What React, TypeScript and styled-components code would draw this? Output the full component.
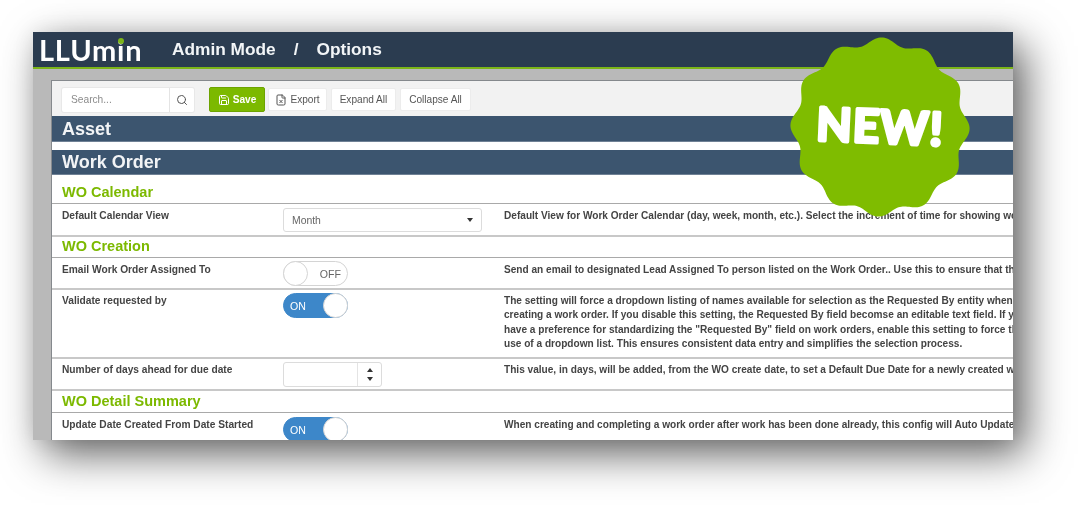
import React from "react";
import styled, { createGlobalStyle } from "styled-components";
import { Search, Save, FileX } from "lucide-react";

const Global = createGlobalStyle`
  html, body { margin: 0; padding: 0; background: #fff; }
  body { font-family: "Liberation Sans", Arial, sans-serif; color: #333; }
`;

const Page = styled.div`
  width: 1078px;
  height: 505px;
  padding: 32px 65px 65px 33px;
  box-sizing: border-box;
  overflow: hidden;
  position: relative;
`;

const Win = styled.div`
  width: 980px;
  height: 408px;
  display: flex;
  flex-direction: column;
  overflow: hidden;
  box-shadow: 12px 14px 40px rgba(0, 0, 0, 0.62), 0 0 20px rgba(0, 0, 0, 0.08);
`;

const Blur = styled.div`
  filter: blur(0.45px);
  display: flex;
  flex-direction: column;
  height: 100%;
`;

const Header = styled.header`
  height: 37px;
  box-sizing: border-box;
  flex: none;
  background: #2b3c50;
  border-bottom: 2px solid #7cb518;
  display: flex;
  align-items: center;
  color: #f2f5f7;
  font-size: 17.3px;
  font-weight: 700;
`;

const Logo = styled.div`
  width: 139px;
  padding-left: 6px;
  box-sizing: border-box;
  font-family: "Lato", sans-serif;
  font-size: 29px;
  font-weight: 700;
  letter-spacing: 0.8px;
  color: #fff;
  line-height: 35px;
  white-space: nowrap;
`;

const LogoI = styled.span`
  position: relative;
  &::after {
    content: "";
    position: absolute;
    left: 1px;
    top: 5.5px;
    width: 6px;
    height: 6px;
    border-radius: 50%;
    background: #7cb518;
  }
`;

const Crumb = styled.span``;
const Slash = styled.span`
  margin: 0 18px;
`;

const Body = styled.div`
  flex: 1;
  min-height: 0;
  background: #b9b9b9;
  padding: 11px 0 0 18px;
  display: flex;
`;

const Panel = styled.div`
  flex: 1;
  min-width: 0;
  background: #fff;
  border-left: 1px solid #85898d;
  border-top: 1px solid #85898d;
  overflow: hidden;
`;

const Toolbar = styled.div`
  height: 35px;
  background: #f2f2f2;
  display: flex;
  align-items: center;
  padding: 2px 0 0 10px;
  box-sizing: border-box;
`;

const SearchBox = styled.div`
  display: flex;
  height: 24px;
  width: 132px;
  background: #fff;
  border-radius: 2px;
  margin-right: 15px;
  box-shadow: 0 0 0 1px #e8e8e8;
`;

const SearchText = styled.div`
  width: 108px;
  box-sizing: border-box;
  padding-left: 9px;
  font-size: 10.2px;
  line-height: 24px;
  color: #8c8c8c;
  border-right: 1px solid #e4e4e4;
`;

const SearchIcon = styled.div`
  flex: 1;
  display: flex;
  align-items: center;
  justify-content: center;
  color: #555;
`;

const Btn = styled.div<{ $w: number; $primary?: boolean }>`
  width: ${(p) => p.$w}px;
  height: ${(p) => (p.$primary ? 25 : 23)}px;
  box-sizing: border-box;
  margin-right: ${(p) => (p.$primary ? 3 : 4)}px;
  display: flex;
  align-items: center;
  justify-content: center;
  gap: 3px;
  font-size: 10.1px;
  border-radius: 2px;
  background: ${(p) => (p.$primary ? "#7cb900" : "#fff")};
  color: ${(p) => (p.$primary ? "#fff" : "#555")};
  font-weight: ${(p) => (p.$primary ? 700 : 400)};
  border: ${(p) => (p.$primary ? "1px solid #6da300" : "1px solid #ececec")};
`;

const Bar = styled.div<{ $gap?: boolean }>`
  height: ${(p) => (p.$gap ? 26 : 25)}px;
  background: #3c556f;
  border-bottom: 1px solid #6f8195;
  box-sizing: border-box;
  color: #f2f4f6;
  font-size: 18px;
  font-weight: 700;
  line-height: ${(p) => (p.$gap ? 26 : 25)}px;
  padding-left: 10px;
  margin-bottom: ${(p) => (p.$gap ? 8 : 0)}px;
`;

const SectionTitle = styled.div<{ $h: number }>`
  height: ${(p) => p.$h}px;
  box-sizing: border-box;
  border-bottom: 1px solid #a9a9a9;
  color: #7cb900;
  font-size: 14.5px;
  font-weight: 700;
  padding-left: 10px;
  display: flex;
  align-items: flex-end;
  padding-bottom: 3px;
`;

const Row = styled.div<{ $h: number; $textTop?: number }>`
  height: ${(p) => p.$h}px;
  box-sizing: border-box;
  display: grid;
  grid-template-columns: 221px 221px 1fr;
  padding-left: 10px;
  border-bottom: 2px solid #c8c8c8;
  --text-top: ${(p) => p.$textTop ?? 5}px;
`;

const Label = styled.div`
  font-size: 10.2px;
  font-weight: 700;
  color: #444;
  padding-top: var(--text-top);
  line-height: 12px;
  white-space: nowrap;
`;

const Control = styled.div<{ $top?: number }>`
  padding-top: ${(p) => p.$top ?? 3}px;
`;

const Desc = styled.div`
  font-size: 10.1px;
  font-weight: 700;
  color: #444;
  line-height: 14.3px;
  padding-top: calc(var(--text-top) - 1px);
  white-space: nowrap;
`;

const SelectBox = styled.div`
  width: 199px;
  height: 24px;
  box-sizing: border-box;
  border: 1px solid #dcdcdc;
  border-radius: 3px;
  display: flex;
  align-items: center;
  justify-content: space-between;
  padding: 0 8px;
  font-size: 10.4px;
  color: #666;
`;

const Caret = styled.span`
  width: 0;
  height: 0;
  border-left: 3px solid transparent;
  border-right: 3px solid transparent;
  border-top: 4px solid #333;
`;

const Toggle = styled.div<{ $on?: boolean }>`
  width: 65px;
  height: 25px;
  box-sizing: border-box;
  border-radius: 13px;
  border: 1px solid ${(p) => (p.$on ? "#3d87c9" : "#d4d4d4")};
  background: ${(p) => (p.$on ? "#3d87c9" : "#fff")};
  color: ${(p) => (p.$on ? "#fff" : "#666")};
  font-size: 10.6px;
  display: flex;
  align-items: center;
  justify-content: space-between;
`;

const ToggleText = styled.span<{ $on?: boolean }>`
  margin: ${(p) => (p.$on ? "0 0 0 6px" : "0 6px 0 0")};
`;

const Knob = styled.span`
  width: 25px;
  height: 25px;
  border-radius: 50%;
  background: #fff;
  border: 1px solid #d4d4d4;
  box-sizing: border-box;
  margin: 0 -1px;
`;

const NumberBox = styled.div`
  width: 99px;
  height: 25px;
  box-sizing: border-box;
  border: 1px solid #dcdcdc;
  border-radius: 3px;
  display: flex;
  justify-content: flex-end;
`;

const Spin = styled.div`
  width: 23px;
  border-left: 1px solid #e4e4e4;
  display: flex;
  flex-direction: column;
  align-items: center;
  justify-content: space-evenly;
`;

const Arrow = styled.span<{ $up?: boolean }>`
  width: 0;
  height: 0;
  border-left: 3.5px solid transparent;
  border-right: 3.5px solid transparent;
  ${(p) => (p.$up ? "border-bottom: 4px solid #333;" : "border-top: 4px solid #333;")}
`;

const BadgeSvg = styled.svg`
  position: absolute;
  left: 786px;
  top: 32px;
  width: 190px;
  height: 190px;
  filter: blur(0.4px);
`;

const BadgeText = styled.text`
  font-family: "Lato", "Open Sans", sans-serif;
  font-weight: 700;
  font-size: 46px;
  fill: #fff;
  stroke: #fff;
  stroke-width: 3.5px;
  stroke-linejoin: round;
  stroke-linecap: round;
  letter-spacing: 1px;
`;

const badgePoints = Array.from({ length: 360 }, (_, i) => {
  const t = (i * Math.PI) / 180;
  const r = 86 + 3.6 * Math.cos(12 * (t - 0.02));
  return `${(94 + r * Math.cos(t)).toFixed(2)},${(95 + r * Math.sin(t)).toFixed(2)}`;
}).join(" ");

export default function App() {
  return (
    <Page>
      <Global />
      <Win>
        <Blur>
          <Header>
            <Logo>
              LLUm<LogoI>i</LogoI>n
            </Logo>
            <Crumb>Admin Mode</Crumb>
            <Slash>/</Slash>
            <Crumb>Options</Crumb>
          </Header>
          <Body>
            <Panel>
              <Toolbar>
                <SearchBox>
                  <SearchText>Search...</SearchText>
                  <SearchIcon>
                    <Search size={12} />
                  </SearchIcon>
                </SearchBox>
                <Btn $w={56} $primary>
                  <Save size={12} />
                  Save
                </Btn>
                <Btn $w={59}>
                  <FileX size={12} />
                  Export
                </Btn>
                <Btn $w={65}>Expand All</Btn>
                <Btn $w={71}>Collapse All</Btn>
              </Toolbar>
              <Bar $gap>Asset</Bar>
              <Bar>Work Order</Bar>
              <SectionTitle $h={29}>WO Calendar</SectionTitle>
              <Row $h={33} $textTop={6}>
                <Label>Default Calendar View</Label>
                <Control $top={4}>
                  <SelectBox>
                    Month
                    <Caret />
                  </SelectBox>
                </Control>
                <Desc>
                  Default View for Work Order Calendar (day, week, month, etc.). Select the increment of time for showing work orders
                </Desc>
              </Row>
              <SectionTitle $h={21}>WO Creation</SectionTitle>
              <Row $h={32} $textTop={6}>
                <Label>Email Work Order Assigned To</Label>
                <Control>
                  <Toggle>
                    <Knob />
                    <ToggleText>OFF</ToggleText>
                  </Toggle>
                </Control>
                <Desc>
                  Send an email to designated Lead Assigned To person listed on the Work Order.. Use this to ensure that the lead
                </Desc>
              </Row>
              <Row $h={69}>
                <Label>Validate requested by</Label>
                <Control>
                  <Toggle $on>
                    <ToggleText $on>ON</ToggleText>
                    <Knob />
                  </Toggle>
                </Control>
                <Desc>
                  The setting will force a dropdown listing of names available for selection as the Requested By entity when
                  <br />
                  creating a work order. If you disable this setting, the Requested By field becomse an editable text field. If you
                  <br />
                  have a preference for standardizing the "Requested By" field on work orders, enable this setting to force the
                  <br />
                  use of a dropdown list. This ensures consistent data entry and simplifies the selection process.
                </Desc>
              </Row>
              <Row $h={32}>
                <Label>Number of days ahead for due date</Label>
                <Control>
                  <NumberBox>
                    <Spin>
                      <Arrow $up />
                      <Arrow />
                    </Spin>
                  </NumberBox>
                </Control>
                <Desc>
                  This value, in days, will be added, from the WO create date, to set a Default Due Date for a newly created work order
                </Desc>
              </Row>
              <SectionTitle $h={22}>WO Detail Summary</SectionTitle>
              <Row $h={32} $textTop={6}>
                <Label>Update Date Created From Date Started</Label>
                <Control $top={4}>
                  <Toggle $on>
                    <ToggleText $on>ON</ToggleText>
                    <Knob />
                  </Toggle>
                </Control>
                <Desc>
                  When creating and completing a work order after work has been done already, this config will Auto Update the date
                </Desc>
              </Row>
            </Panel>
          </Body>
        </Blur>
      </Win>
      <BadgeSvg viewBox="0 0 190 190">
        <polygon points={badgePoints} fill="#7fbc00" />
        <BadgeText x="94" y="111" textAnchor="middle" transform="rotate(2.5 94 95)">
          NEW!
        </BadgeText>
      </BadgeSvg>
    </Page>
  );
}
